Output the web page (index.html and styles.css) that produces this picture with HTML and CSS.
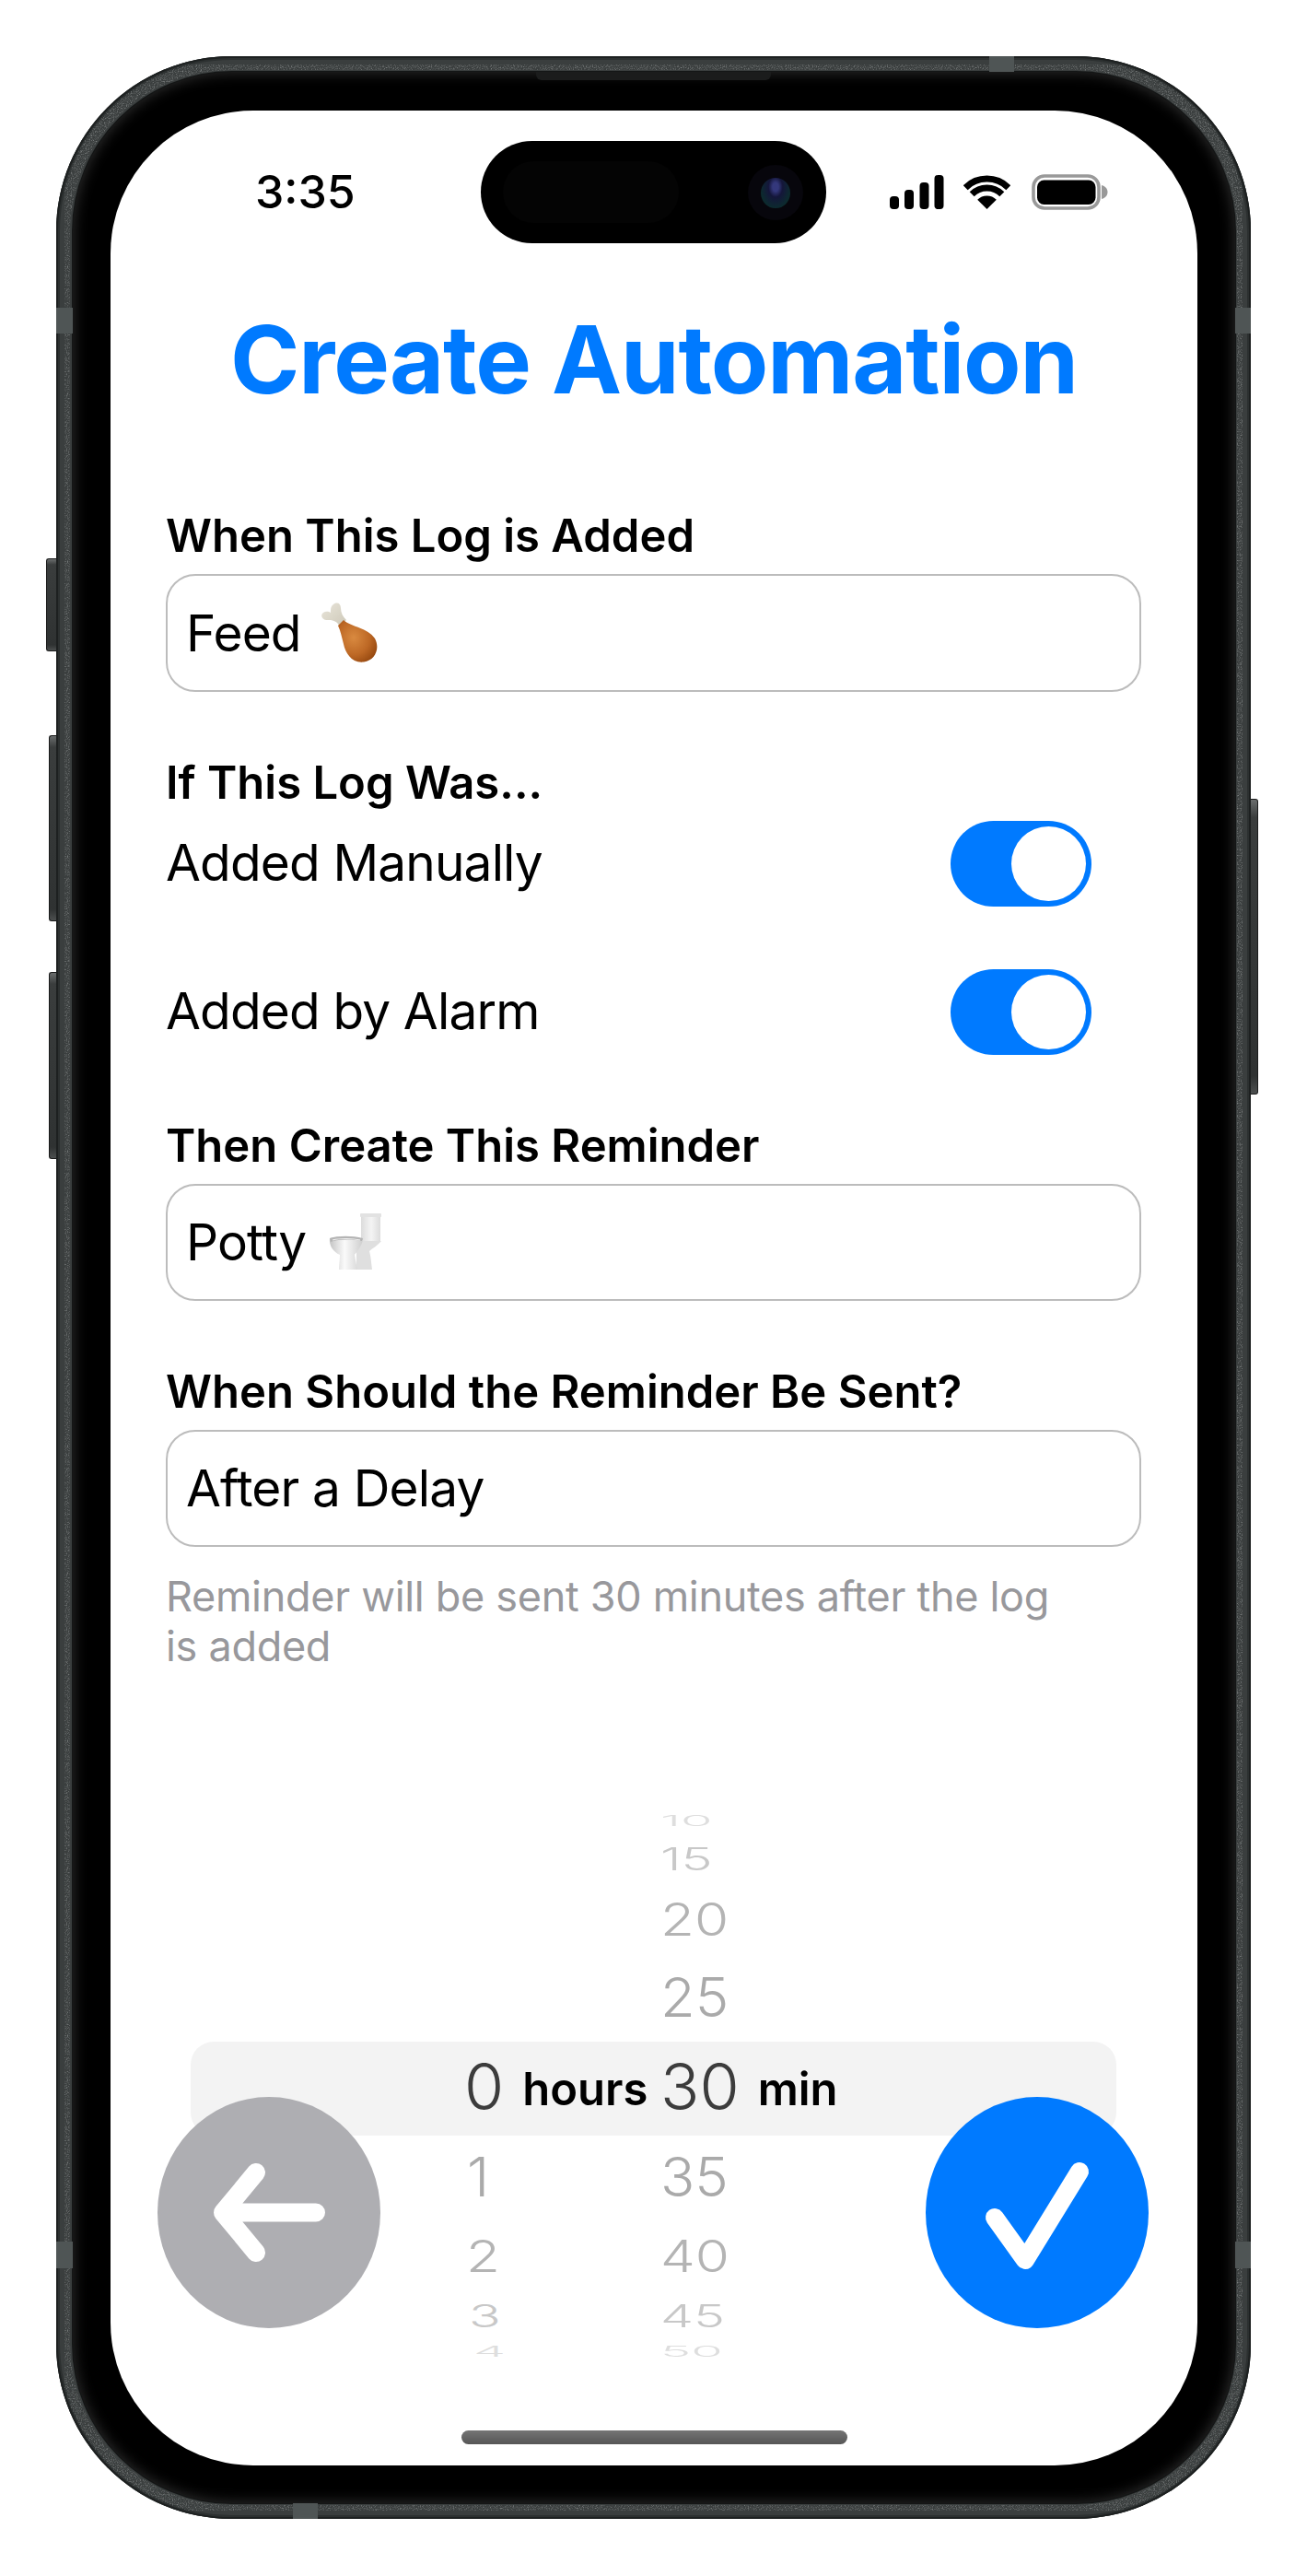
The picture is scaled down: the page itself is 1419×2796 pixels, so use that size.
FILE: index.html
```html
<!DOCTYPE html>
<html lang="en">
<head>
<meta charset="utf-8">
<title>Create Automation</title>
<link rel="stylesheet" href="styles.css">
</head>
<body>
<div class="device">
  <svg class="grain" width="1297" height="2673" aria-hidden="true">
    <defs>
      <filter id="speckle" x="0" y="0" width="100%" height="100%">
        <feTurbulence type="fractalNoise" baseFrequency="0.8" numOctaves="2" seed="4" result="n"/>
        <feColorMatrix in="n" type="matrix" values="0 0 0 0 .6  0 0 0 0 .62  0 0 0 0 .62  1.1 0 0 0 -.5" result="g"/>
        <feComposite in="g" in2="SourceAlpha" operator="in"/>
      </filter>
    </defs>
    <rect x="9" y="9" width="1279" height="2655" rx="181" fill="none" stroke="#000" stroke-width="12" filter="url(#speckle)"/>
  </svg>
  <span class="side side-mute"></span>
  <span class="side side-up"></span>
  <span class="side side-down"></span>
  <span class="side side-power"></span>
  <span class="band band-left-top"></span>
  <span class="band band-right-top"></span>
  <span class="band band-left-bottom"></span>
  <span class="band band-right-bottom"></span>
  <span class="band band-top"></span>
  <span class="band band-bottom"></span>
  <div class="bezel">
    <span class="speaker"></span>
    <div class="screen">
      <header class="status">
        <span class="time">3:35</span>
        <div class="island">
          <span class="sensor"></span>
          <span class="camera"><span class="lens"></span></span>
        </div>
        <div class="status-icons">
          <svg class="signal" width="59" height="37" viewBox="0 0 59 37" aria-hidden="true">
            <rect x="0" y="23" width="10" height="14" rx="4"/>
            <rect x="16" y="16" width="10" height="21" rx="4"/>
            <rect x="32.5" y="8" width="10" height="29" rx="4"/>
            <rect x="48.5" y="0" width="10" height="37" rx="4"/>
          </svg>
          <svg class="wifi" width="51" height="37" viewBox="0 0 51 37" aria-hidden="true">
            <path d="M2.2 13.7A33 33 0 0 1 48.8 13.7" fill="none" stroke="#000" stroke-width="7"/>
            <path d="M9.2 20.7A23 23 0 0 1 41.8 20.7" fill="none" stroke="#000" stroke-width="7"/>
            <path d="M25.5 37L15.2 26.7A14.5 14.5 0 0 1 35.8 26.7Z"/>
          </svg>
          <svg class="battery" width="83" height="39" viewBox="0 0 83 39" aria-hidden="true">
            <rect x="2" y="2" width="71" height="35" rx="12" fill="none" stroke="#999" stroke-width="3.6"/>
            <rect x="6" y="6.5" width="63.5" height="26.5" rx="7.5"/>
            <path d="M76 12C80 13 82.5 16 82.5 19.5C82.5 23 80 26 76 27Z" fill="#999"/>
          </svg>
        </div>
      </header>

      <h1 class="title">Create Automation</h1>

      <main class="form">
        <section class="group group-first">
          <h2 class="label">When This Log is Added</h2>
          <div class="field">
            <span>Feed</span>
            <svg class="emoji" width="62" height="65" viewBox="0 0 62 65" aria-hidden="true">
              <defs>
                <radialGradient id="meat" cx="40%" cy="42%" r="68%">
                  <stop offset="0" stop-color="#d98a40"/>
                  <stop offset=".6" stop-color="#bd6825"/>
                  <stop offset="1" stop-color="#96480f"/>
                </radialGradient>
                <linearGradient id="bone" x1="0" y1="0" x2="1" y2="1">
                  <stop offset="0" stop-color="#e9e5da"/>
                  <stop offset="1" stop-color="#cdc8b8"/>
                </linearGradient>
              </defs>
              <path d="M13 2C17 -1 21 1 21 6C21 11 23 15 27 19L20 26C17 21 14 19 8 19C1 20 -2 14 2 11C5 9 8 10 10 11C10 7 10 4 13 2Z" fill="url(#bone)"/>
              <path d="M18 25L24 19C33 27 50 27 58 39C64 50 58 63 46 64.5C33 66 26 55 24 45C22 38 21 31 18 25Z" fill="url(#meat)"/>
            </svg>
          </div>
        </section>

        <section class="group">
          <h2 class="label">If This Log Was...</h2>
          <div class="switch-row">
            <span class="switch-text">Added Manually</span>
            <span class="toggle"><span class="knob"></span></span>
          </div>
          <div class="switch-row">
            <span class="switch-text">Added by Alarm</span>
            <span class="toggle"><span class="knob"></span></span>
          </div>
        </section>

        <section class="group">
          <h2 class="label">Then Create This Reminder</h2>
          <div class="field">
            <span>Potty</span>
            <svg class="emoji emoji-toilet" width="58" height="62" viewBox="0 0 58 62" aria-hidden="true">
              <defs>
                <linearGradient id="porcelain" x1="0" y1="0" x2="1" y2="0">
                  <stop offset="0" stop-color="#c4c4c4"/>
                  <stop offset=".45" stop-color="#fafafa"/>
                  <stop offset="1" stop-color="#cdcdcd"/>
                </linearGradient>
                <linearGradient id="tank" x1="0" y1="0" x2="1" y2="0">
                  <stop offset="0" stop-color="#dcdcdc"/>
                  <stop offset=".5" stop-color="#f4f4f4"/>
                  <stop offset="1" stop-color="#dadada"/>
                </linearGradient>
              </defs>
              <path d="M36 30L57 30C52 36 47 38 44 41C46 48 46 55 47 61L30 61L30 38Z" fill="#dfdfdf"/>
              <path d="M35 2H57L56 4V30L37 30L35 28V3Z" fill="url(#tank)"/>
              <rect x="34" y="0" width="23" height="4" rx="1" fill="#e2e2e2"/>
              <path d="M1 27C10 25 26 25 37 28C36 36 30 42 28 45C29 51 30 56 31 61H11C11 55 12 50 12 45C5 42 0 35 1 27Z" fill="url(#porcelain)"/>
              <path d="M1 27C10 24 26 24 37 27L36 30C26 28 10 28 2 31Z" fill="#b4b4b4"/>
              <path d="M4 29C12 27 26 27 34 29" fill="none" stroke="#f2f2f2" stroke-width="1.2"/>
            </svg>
          </div>
        </section>

        <section class="group group-last">
          <h2 class="label">When Should the Reminder Be Sent?</h2>
          <div class="field"><span>After a Delay</span></div>
          <p class="hint">Reminder will be sent 30 minutes after the log<br>is added</p>
        </section>
      </main>

      <div class="picker">
        <div class="picker-band"></div>
        <div class="wheel wheel-hours">
          <div class="row r0"></div>
          <div class="row r1"></div>
          <div class="row r2"></div>
          <div class="row r3"></div>
          <div class="row r4"><span class="num">0</span><span class="unit">hours</span></div>
          <div class="row r5"><span class="num">1</span></div>
          <div class="row r6"><span class="num">2</span></div>
          <div class="row r7"><span class="num">3</span></div>
          <div class="row r8"><span class="num">4</span></div>
        </div>
        <div class="wheel wheel-min">
          <div class="row r0"><span class="num">10</span></div>
          <div class="row r1"><span class="num">15</span></div>
          <div class="row r2"><span class="num">20</span></div>
          <div class="row r3"><span class="num">25</span></div>
          <div class="row r4"><span class="num">30</span><span class="unit">min</span></div>
          <div class="row r5"><span class="num">35</span></div>
          <div class="row r6"><span class="num">40</span></div>
          <div class="row r7"><span class="num">45</span></div>
          <div class="row r8"><span class="num">50</span></div>
        </div>
      </div>

      <div class="home"></div>

      <button class="fab fab-back" type="button" aria-label="Back">
        <svg width="242" height="251" viewBox="0 0 242 251" aria-hidden="true">
          <path d="M107 82L71 125.5L107 169M71 125.5H172" fill="none" stroke="#fff" stroke-width="20" stroke-linecap="round" stroke-linejoin="round"/>
        </svg>
      </button>
      <button class="fab fab-done" type="button" aria-label="Done">
        <svg width="242" height="251" viewBox="0 0 242 251" aria-hidden="true">
          <path d="M75 131L108 177L167 81" fill="none" stroke="#fff" stroke-width="20" stroke-linecap="round" stroke-linejoin="round"/>
        </svg>
      </button>
    </div>
  </div>
</div>
</body>
</html>
```

FILE: styles.css
```css
* { box-sizing: border-box; }

html, body { margin: 0; padding: 0; background: #fff; }

body {
  width: 1419px;
  height: 2796px;
  padding: 61px 0 0 61px;
  overflow: hidden;
  font-family: Inter, "Liberation Sans", sans-serif;
  color: #000;
}

/* ---------- device shell ---------- */
.device {
  position: relative;
  width: 1297px;
  height: 2673px;
  padding: 17px 17px 17px 18px;
  border-radius: 190px;
  background: #3a3e3e;
  box-shadow: inset 0 0 0 2px #1d2020, inset 0 0 0 4px #2c3030;
}

.grain {
  position: absolute;
  left: 0;
  top: 0;
  pointer-events: none;
}

.bezel {
  position: relative;
  width: 100%;
  height: 100%;
  padding: 42px 41px 41px 41px;
  border-radius: 173px;
  background: #000;
  box-shadow: 0 0 0 1px #141616, inset 0 0 16px rgba(255, 255, 255, .2);
}

.speaker {
  position: absolute;
  left: 503px;
  top: 0;
  width: 255px;
  height: 9px;
  border-radius: 0 0 6px 6px;
  background: #1b1c1c;
}

.band {
  position: absolute;
  background: #4f5555;
  z-index: 1;
}

.band-left-top { left: 0; top: 273px; width: 18px; height: 28px; }
.band-right-top { right: 0; top: 273px; width: 17px; height: 28px; }
.band-left-bottom { left: 0; top: 2372px; width: 18px; height: 29px; }
.band-right-bottom { right: 0; top: 2372px; width: 17px; height: 29px; }
.band-top { left: 1013px; top: 0; width: 27px; height: 17px; }
.band-bottom { left: 257px; bottom: 0; width: 27px; height: 17px; }

.side {
  position: absolute;
  background: linear-gradient(to bottom, #6a6d6d 0, #3a3d3d 6%, #2f3232 94%, #4c4f4f 100%);
  border: 1px solid #1a1b1b;
}

.side-mute { left: -11px; top: 545px; width: 11px; height: 101px; border-right: 0; border-radius: 3px 0 0 3px; }
.side-up { left: -8px; top: 737px; width: 8px; height: 202px; border-right: 0; border-radius: 3px 0 0 3px; }
.side-down { left: -8px; top: 994px; width: 8px; height: 203px; border-right: 0; border-radius: 3px 0 0 3px; }
.side-power { right: -8px; top: 806px; width: 8px; height: 321px; border-left: 0; border-radius: 0 3px 3px 0; }

.screen {
  position: relative;
  width: 1180px;
  height: 2556px;
  display: flex;
  flex-direction: column;
  border-radius: 155px;
  overflow: hidden;
  background: #fff;
}

/* ---------- status bar ---------- */
.status {
  display: grid;
  grid-template-columns: 402px 375px 1fr;
  align-items: center;
  padding-top: 33px;
}

.time {
  padding-left: 157px;
  padding-bottom: 2px;
  font-size: 50px;
  font-weight: 500;
  line-height: 60px;
}

.island {
  position: relative;
  height: 111px;
  border-radius: 56px;
  background: #000;
}

.sensor {
  position: absolute;
  left: 24px;
  top: 22px;
  width: 191px;
  height: 67px;
  border-radius: 34px;
  background: #040404;
}

.camera {
  position: absolute;
  left: 290px;
  top: 26px;
  width: 60px;
  height: 60px;
  display: flex;
  align-items: center;
  justify-content: center;
  border-radius: 50%;
  background: #07060c;
}

.lens {
  width: 32px;
  height: 33px;
  border-radius: 50%;
  background: radial-gradient(ellipse at 50% 30%, #34387c 0 14%, #14163a 34%, #0c2b2e 72%, #0a0a1c 100%);
}

.status-icons {
  display: flex;
  align-items: center;
  gap: 21px;
  padding-left: 69px;
}

.status-icons svg { display: block; flex: none; }
.wifi { margin-right: 2px; }

/* ---------- title ---------- */
.title {
  margin: 76px 0 0;
  text-align: center;
  color: #007aff;
  font-size: 102px;
  font-weight: 700;
  line-height: 100px;
  letter-spacing: -1.1px;
}

/* ---------- form ---------- */
.form {
  display: flex;
  flex-direction: column;
  padding: 0 61px 0 60px;
  font-size: 55px;
  letter-spacing: -.85px;
}

.group { margin-top: 68px; }
.group-first { margin-top: 111px; }
.group-last { margin-top: 67.5px; }

.label {
  margin: 0 0 10px;
  font-size: 49px;
  font-weight: 600;
  line-height: 62px;
  letter-spacing: 0;
}

.field {
  display: flex;
  align-items: center;
  gap: 22px;
  height: 127.5px;
  padding-left: 20px;
  border: 2px solid #bcbcbc;
  border-radius: 32px;
}

.emoji { display: block; flex: none; }
.emoji-toilet { margin-left: 3px; }

.switch-row {
  display: flex;
  align-items: center;
  justify-content: space-between;
  height: 93px;
  padding-right: 54px;
  margin-bottom: 68px;
}

.switch-row:last-child { margin-bottom: 0; }
.switch-text { padding-bottom: 3px; }

.toggle {
  display: flex;
  justify-content: flex-end;
  align-items: center;
  width: 153px;
  height: 93px;
  padding: 6px;
  border-radius: 47px;
  background: #007aff;
}

.knob {
  width: 81px;
  height: 81px;
  border-radius: 50%;
  background: #fff;
}

.hint {
  margin: 26.5px 0 0;
  color: #98989c;
  font-size: 45px;
  line-height: 54px;
  letter-spacing: -.3px;
}

/* ---------- picker ---------- */
.picker {
  position: relative;
  display: flex;
  height: 604px;
  margin-top: 148px;
  padding-left: 384px;
}

.picker-band {
  position: absolute;
  left: 87px;
  top: 254px;
  width: 1005px;
  height: 102px;
  border-radius: 25px;
  background: #f3f3f3;
}

.wheel {
  position: relative;
  display: flex;
  flex-direction: column;
}

.wheel-hours { width: 213px; }
.wheel-min { width: 220px; }

.row {
  display: flex;
  align-items: center;
  white-space: nowrap;
}

.num {
  display: inline-block;
  font-weight: 350;
  font-size: 70px;
  line-height: 80px;
  transform-origin: 0 50%;
}

.unit {
  margin-left: 20px;
  padding-top: 6px;
  font-size: 49px;
  font-weight: 600;
  line-height: 80px;
}

.r0 { height: 30px; }
.r1 { height: 52px; }
.r2 { height: 78px; }
.r3 { height: 93px; }
.r4 { height: 101px; }
.r5 { height: 95px; }
.r6 { height: 77px; }
.r7 { height: 53px; }
.r8 { height: 25px; }

.r0 .num { color: #dedede; transform: scale(.8, .22); }
.r1 .num { color: #c8c8c8; transform: scale(.82, .48); }
.r2 .num { color: #b4b4b4; transform: scale(.86, .7); }
.r3 .num { color: #aaa; transform: scale(.88, .84); }
.r4 .num { color: #3c3c3c; }
.r5 .num { color: #aaa; transform: scale(.88, .84); }
.r6 .num { color: #b4b4b4; transform: scale(.86, .69); }
.r7 .num { color: #c8c8c8; transform: scale(.82, .49); }
.r8 .num { color: #dedede; transform: scale(.8, .22); }

.wheel-hours .r5 .num { transform: translateX(3px) scale(.88, .84); }
.wheel-hours .r6 .num { transform: translateX(2px) scale(.86, .69); }
.wheel-hours .r7 .num { transform: translateX(5px) scale(.82, .49); }
.wheel-hours .r8 .num { transform: translateX(10px) scale(.8, .22); }

/* ---------- home indicator ---------- */
.home {
  align-self: center;
  width: 419px;
  height: 15px;
  margin-top: 72px;
  border-radius: 8px;
  background: linear-gradient(to bottom, #747474, #565656);
}

/* ---------- floating buttons ---------- */
.fab {
  position: absolute;
  top: 2155.5px;
  width: 242px;
  height: 251px;
  padding: 0;
  border: 0;
  border-radius: 50%;
}

.fab svg { display: block; }
.fab-back { left: 51px; background: #aeaeb2; }
.fab-done { left: 885px; background: #007aff; }
```
